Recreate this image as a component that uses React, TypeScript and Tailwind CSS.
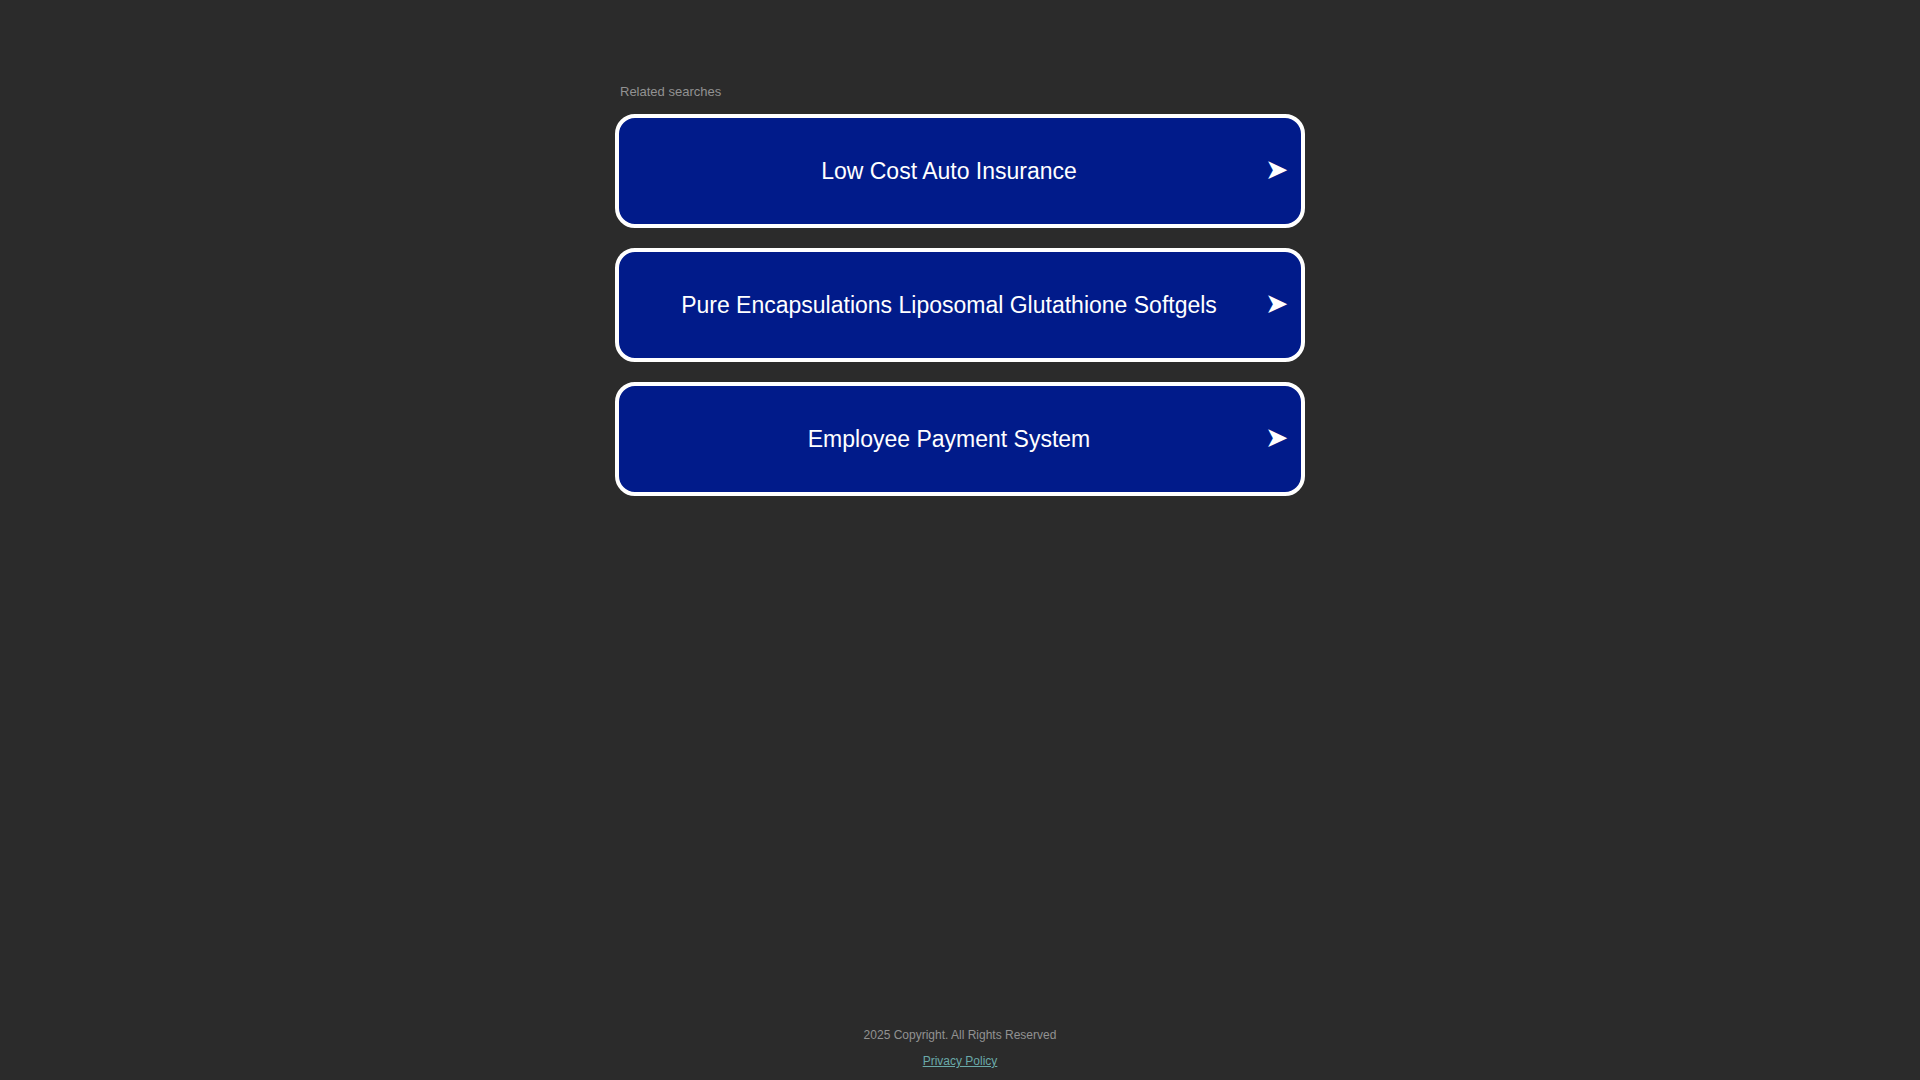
import React from 'react';

const searches = [
  'Low Cost Auto Insurance',
  'Pure Encapsulations Liposomal Glutathione Softgels',
  'Employee Payment System',
];

const App: React.FC = () => {
  return (
    <div
      className="min-h-screen bg-[#2b2b2b] flex flex-col items-center"
      style={{ fontFamily: '"Liberation Sans", Arial, sans-serif' }}
    >
      <div className="w-[690px] pt-[84px] flex-1">
        <p className="text-[13px] text-[#929292] pl-[5px] mb-[14px] leading-[16px]">Related searches</p>
        <div className="flex flex-col gap-[20px]">
          {searches.map((s) => (
            <a
              key={s}
              href="#"
              className="h-[114px] rounded-[20px] border-4 border-white bg-[#011b8a] flex items-center pl-[14px] pr-[14px] text-white no-underline"
            >
              <span className="flex-1 text-center text-[23px] leading-none">{s}</span>
              <span className="w-[22px] -mt-[2px] flex justify-center text-[28px] leading-none">➤</span>
            </a>
          ))}
        </div>
      </div>
      <div className="flex flex-col items-center pb-[12px]">
        <p className="text-[12px] text-[#929292] leading-[14px]">2025 Copyright. All Rights Reserved</p>
        <a href="#" className="mt-[12px] text-[12px] text-[#6aa9a9] underline leading-[14px]">
          Privacy Policy
        </a>
      </div>
    </div>
  );
};

export default App;
